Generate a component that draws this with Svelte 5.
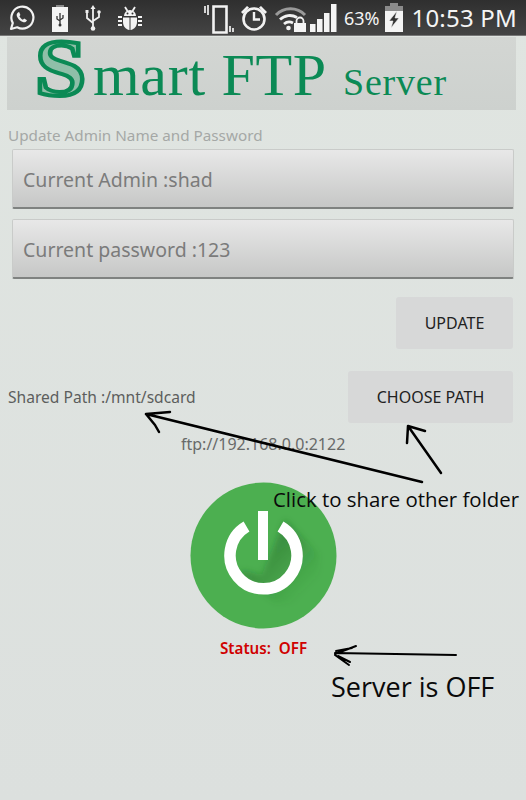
<script lang="ts">
let admin = "shad";
let password = "123";
let sharedPath = "/mnt/sdcard";
let ftpUrl = "ftp://192.168.0.0:2122";
const signalBars = [
	{ x: 0, h: 8 },
	{ x: 7, h: 13 },
	{ x: 14, h: 19 },
	{ x: 21, h: 28 }
];
</script>

<div class="screen">
  <header class="statusbar">
    <div class="icons-left">
      <svg class="ic whatsapp" viewBox="0 0 28 28" width="28" height="28">
        <path d="M3 25l1.800-6a11 11 0 1 1 4.400 4.300z" fill="none" stroke="#f2f2f2" stroke-width="2.200" stroke-linejoin="round"/>
        <path d="M10 8.500c-1.500 1-1.800 2.800-.5 5 1.300 2.300 3.500 4.200 6 4.800 1.600.3 3-.5 3.500-2l-2.800-1.700-1.300 1.200c-1.500-.6-2.800-2-3.500-3.500l1-1.300-1.300-2.900z" fill="#f2f2f2"/>
      </svg>
      <svg class="ic battery-usb" viewBox="0 0 18 28" width="18" height="28">
        <path d="M5 1h8v2h4v25H1V3h4z" fill="#f4f4f4"/>
        <path d="M5 1h8v2H5z" fill="#8a8a8a"/>
        <path d="M9 9v12M6 12v3l3 2M12 11v3l-3 2" fill="none" stroke="#333" stroke-width="1.300"/>
        <circle cx="9" cy="21" r="1.500" fill="#333"/>
      </svg>
      <svg class="ic usb" viewBox="0 0 18 28" width="18" height="28">
        <path d="M9 3v21M3 9v5l6 5M15 9v4l-6 4" fill="none" stroke="#f0f0f0" stroke-width="1.800"/>
        <path d="M9 1l2.500 4h-5zM1.500 6h3v3h-3z" fill="#f0f0f0"/>
        <circle cx="15" cy="8" r="1.800" fill="#f0f0f0"/>
        <circle cx="9" cy="24.500" r="2.300" fill="#f0f0f0"/>
      </svg>
      <svg class="ic bug" viewBox="0 0 26 26" width="26" height="26">
        <path d="M7 11a6 6 0 0 1 12 0z" fill="#f4f4f4"/>
        <path d="M6 12.500h6.500V25C8.500 24.500 6 21 6 17zM20 12.500h-6.500V25c4-.5 6.500-4 6.500-8z" fill="#f4f4f4"/>
        <path d="M8 2l2.500 4M18 2l-2.500 4M1 12h4M1 16h4M1 20h4M21 12h4M21 16h4M21 20h4" stroke="#f4f4f4" stroke-width="1.800"/>
        <circle cx="10.500" cy="8.500" r="1" fill="#333"/>
        <circle cx="15.500" cy="8.500" r="1" fill="#333"/>
      </svg>
    </div>
    <div class="icons-right">
      <svg class="ic vibrate" viewBox="0 0 32 32" width="32" height="32">
        <path d="M11.500 4.500h13v26h-13z" fill="none" stroke="#f2f2f2" stroke-width="2.600"/>
        <path d="M3 4v7M6 3v10M28 24v6M31 26v4" stroke="#e6e6e6" stroke-width="1.800"/>
      </svg>
      <svg class="ic alarm" viewBox="0 0 28 28" width="28" height="28">
        <circle cx="14" cy="15" r="10.500" fill="none" stroke="#f2f2f2" stroke-width="2.600"/>
        <path d="M14 8v7.500h6" fill="none" stroke="#f2f2f2" stroke-width="2.400"/>
        <path d="M1 8l6-6 2 1.500-6 6.500zM27 8l-6-6-2 1.500 6 6.500z" fill="#f2f2f2"/>
      </svg>
      <svg class="ic wifi" viewBox="0 0 33 28" width="33" height="28">
        <path d="M2 11a20 20 0 0 1 29 0" fill="none" stroke="#9a9a9a" stroke-width="3"/>
        <path d="M6 15.500a14 14 0 0 1 17-2M10 20a8 8 0 0 1 9-1" fill="none" stroke="#f2f2f2" stroke-width="2.800"/>
        <circle cx="14.500" cy="24" r="2.300" fill="#f2f2f2"/>
        <path d="M20 19h12v9H20z" fill="#f4f4f4"/>
        <path d="M22.500 19v-2a3.500 3.500 0 0 1 7 0v2" fill="none" stroke="#f4f4f4" stroke-width="1.800"/>
      </svg>
      <svg class="ic signal" viewBox="0 0 28 28" width="28" height="28">
        {#each signalBars as bar}
          <rect x={bar.x} y={28 - bar.h} width="5.500" height={bar.h} fill="#f4f4f4"/>
        {/each}
      </svg>
      <span class="pct">63%</span>
      <svg class="ic charging" viewBox="0 0 20 29" width="20" height="29">
        <path d="M6 0h8v3h5v26H1V3h5z" fill="#f4f4f4"/>
        <path d="M6 0h8v3h5v5H1V3h5z" fill="#8b8b8b"/>
        <path d="M13 8l-8 10h4l-2 7 8-10h-4z" fill="#333" stroke="#f4f4f4" stroke-width=".6"/>
      </svg>
      <span class="clock">10:53 PM</span>
    </div>
  </header>

  <main class="content">
    <div class="logo">
      <span class="logo-s">S</span>
      <span class="logo-main">mart FTP</span>
      <span class="logo-server">Server</span>
    </div>

    <p class="hint">Update Admin Name and Password</p>

    <div class="fields">
      <div class="field">Current Admin :{admin}</div>
      <div class="field">Current password :{password}</div>
    </div>

    <div class="update-row">
      <button class="btn update">UPDATE</button>
    </div>

    <div class="path-row">
      <span class="shared">Shared Path :{sharedPath}</span>
      <button class="btn choose">CHOOSE PATH</button>
    </div>

    <p class="url">{ftpUrl}</p>

    <div class="power">
      <svg viewBox="0 0 147 147" width="147" height="147">
        <defs>
          <clipPath id="disc"><circle cx="73.500" cy="73.500" r="73"/></clipPath>
          <linearGradient id="shade" x1="0.200" y1="0.200" x2="0.850" y2="0.850">
            <stop offset="0" stop-color="#1f5a25" stop-opacity=".55"/>
            <stop offset=".7" stop-color="#1f5a25" stop-opacity=".12"/>
            <stop offset="1" stop-color="#1f5a25" stop-opacity="0"/>
          </linearGradient>
          <filter id="soft" x="-20%" y="-20%" width="140%" height="140%">
            <feGaussianBlur stdDeviation="3"/>
          </filter>
        </defs>
        <circle cx="73.500" cy="73.500" r="73" fill="#4caf50"/>
        <g clip-path="url(#disc)">
          <path d="M95 38l34 34v22l-26 27h-18l-36-30 4-2 19 4z" fill="url(#shade)" filter="url(#soft)"/>
        </g>
        <path d="M56.500 44.500a33.500 33.500 0 1 0 34 0" fill="none" stroke="#fff" stroke-width="11.500"/>
        <rect x="68" y="29" width="10" height="49" fill="#fff"/>
      </svg>
    </div>

    <p class="status">Status:&nbsp; OFF</p>
  </main>

  <svg class="notes" viewBox="0 0 526 800" width="526" height="800">
    <g fill="none" stroke="#000" stroke-linecap="round" stroke-linejoin="round">
      <path d="M422 482L146 414M146 414L170 412M146 414L155 425L159 432" stroke-width="2.500"/>
      <path d="M441 473L408 426M408 426L407 443M408 426L425 431" stroke-width="2.500"/>
      <path d="M456 655L335 653M335 654L356 646M335 655L349 665M338 656L350 662M336 651L352 648" stroke-width="2"/>
    </g>
  </svg>
  <span class="note note-share">Click to share other folder</span>
  <span class="note note-off">Server is OFF</span>
</div>

<style>
  :global(body) {
    margin: 0;
    background: #dfe3e0;
  }

  .screen {
    position: relative;
    width: 526px;
    height: 800px;
    overflow: hidden;
    background: linear-gradient(#e0e5e1, #dce0de);
    font-family: "Noto Sans", sans-serif;
  }

  .statusbar {
    display: flex;
    justify-content: space-between;
    align-items: center;
    height: 36px;
    padding: 0 9px 0 8px;
    box-sizing: border-box;
    background: linear-gradient(#2f2f2f, #444);
    border-bottom: 1px solid #777;
    color: #f4f4f4;
  }

  .icons-left,
  .icons-right {
    display: flex;
    align-items: center;
  }

  .icons-left {
    gap: 15px;
  }

  .icons-right {
    gap: 3px;
  }

  .ic {
    display: block;
    flex-shrink: 0;
  }

  .vibrate {
    margin-right: 3px;
  }

  .alarm {
    margin-right: 3px;
  }

  .pct {
    font-size: 18px;
    margin: 0 1px 0 3px;
  }

  .clock {
    font-size: 24px;
    margin-left: 5px;
    letter-spacing: 0.2px;
  }

  .content {
    display: flex;
    flex-direction: column;
    padding: 1px 13px 0 7px;
  }

  .logo {
    display: flex;
    align-items: baseline;
    height: 73px;
    padding-left: 28px;
    background: linear-gradient(#d3d6d3, #cdd1ce);
    color: #0b8a55;
    font-family: "Liberation Serif", serif;
    white-space: nowrap;
    line-height: 62px;
    margin-right: -3px;
  }

  .logo-s {
    display: inline-block;
    width: 58px;
    flex-shrink: 0;
    font-size: 80px;
    font-weight: 700;
    color: #8fbfa8;
    -webkit-text-stroke: 4px #0b8a55;
    transform: scaleX(1.15);
    transform-origin: left center;
  }

  .logo-main {
    font-size: 60px;
    letter-spacing: 0.7px;
  }

  .logo-server {
    font-size: 38px;
    margin-left: 16px;
    letter-spacing: 0.8px;
  }

  .hint {
    margin: 16px 0 0 1px;
    font-size: 15.250px;
    line-height: 18px;
    color: #a5a8a6;
  }

  .fields {
    display: flex;
    flex-direction: column;
    gap: 10px;
    margin: 5px -1px 0 5px;
  }

  .field {
    height: 60px;
    box-sizing: border-box;
    padding: 2px 10px 0;
    display: flex;
    align-items: center;
    border-radius: 2px;
    border: 1px solid #c9cbc9;
    border-bottom: 2px solid #7f8280;
    background: linear-gradient(#e8e8e8, #c6c7c6);
    color: #7b7b7b;
    font-size: 19.500px;
    white-space: pre;
  }

  .update-row {
    display: flex;
    justify-content: flex-end;
    margin-top: 18px;
  }

  .btn {
    border: 0;
    border-radius: 3px;
    background: #d7d8d8;
    color: #222;
    font-family: inherit;
    font-size: 16px;
    padding: 0;
    height: 52px;
  }

  .update {
    width: 117px;
  }

  .path-row {
    display: flex;
    justify-content: space-between;
    align-items: center;
    margin: 22px 0 0 1px;
  }

  .choose {
    width: 165px;
  }

  .shared {
    font-size: 15.600px;
    color: #5c5e5d;
  }

  .url {
    margin: 11px 0 0 174px;
    font-size: 16px;
    line-height: 20px;
    color: #686a69;
  }

  .power {
    display: flex;
    justify-content: center;
    margin: 28px 0 0 7px;
  }

  .power svg {
    display: block;
  }

  .status {
    margin: 9px 0 0 213px;
    font-size: 15.200px;
    line-height: 20px;
    font-weight: 600;
    color: #d00000;
  }

  .notes {
    position: absolute;
    inset: 0;
    pointer-events: none;
  }

  .note {
    position: absolute;
    color: #0a0a0a;
    font-family: "Open Sans", sans-serif;
    white-space: nowrap;
  }

  .note-share {
    left: 273px;
    top: 486px;
    font-size: 20.400px;
    line-height: 26px;
  }

  .note-off {
    left: 331px;
    top: 671px;
    font-size: 27px;
    line-height: 32px;
  }
</style>
